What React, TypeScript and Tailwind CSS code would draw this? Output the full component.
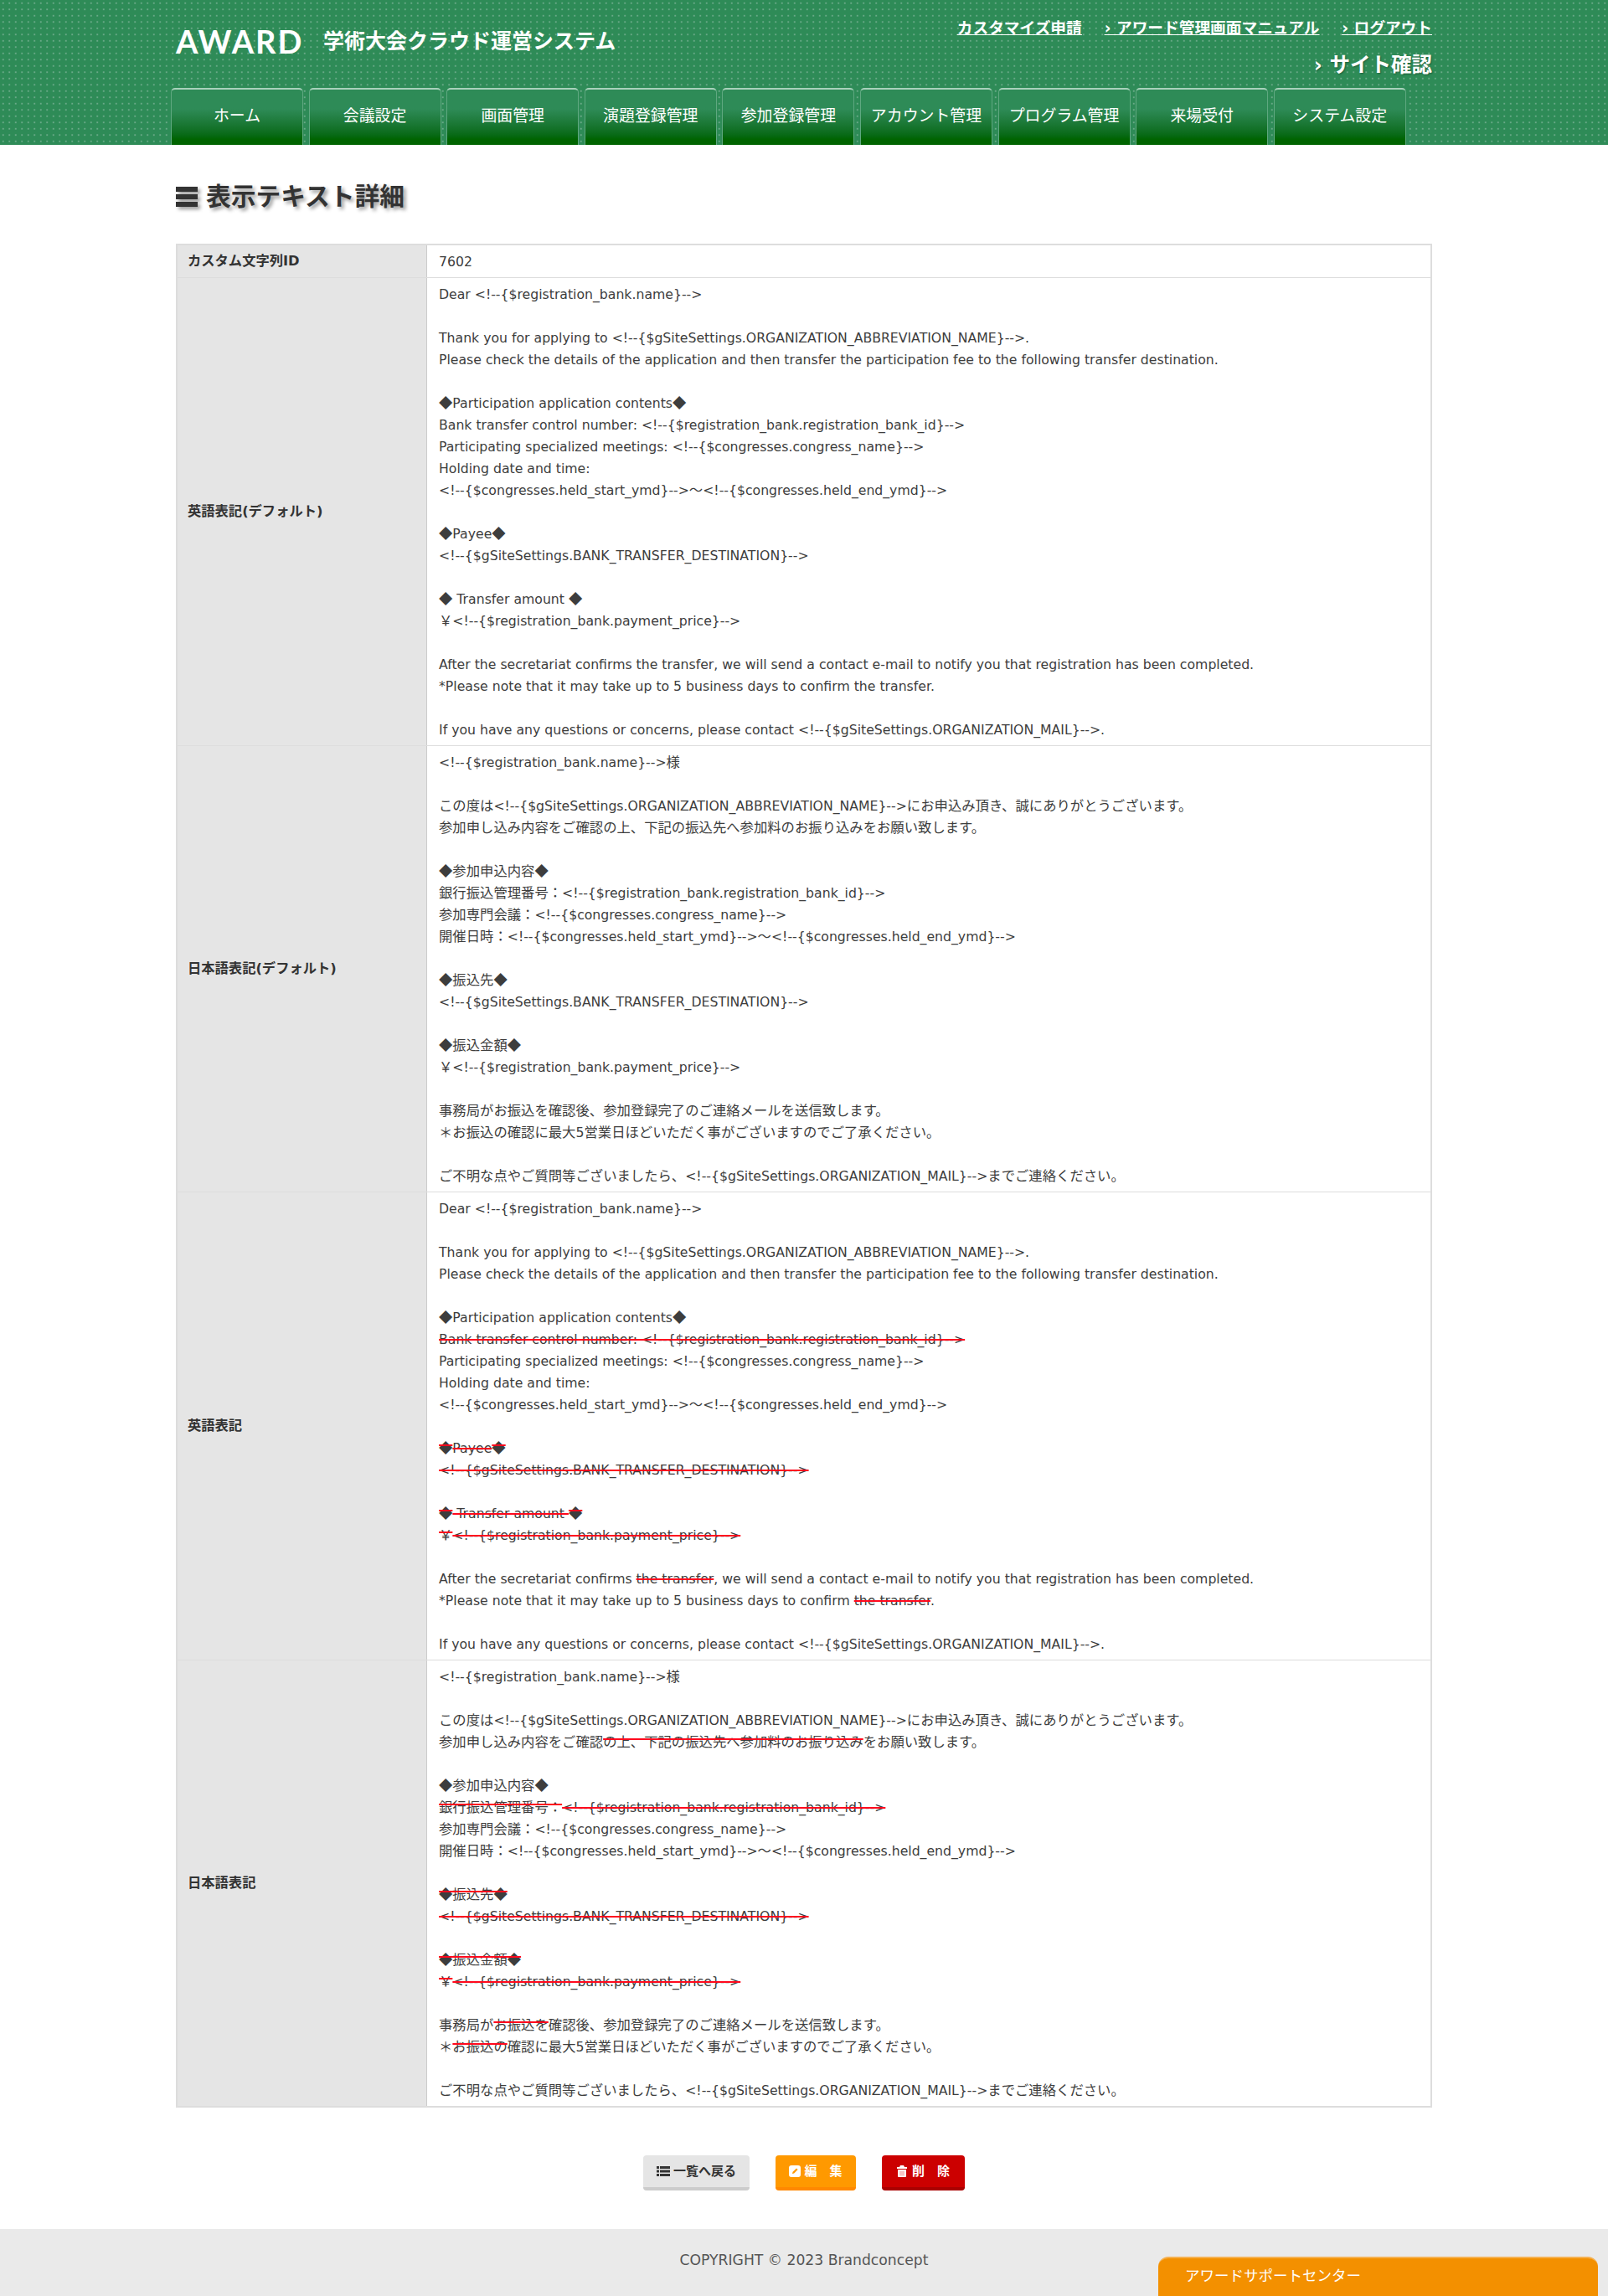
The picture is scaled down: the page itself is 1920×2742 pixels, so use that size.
import { ReactNode } from "react";

const navItems = [
  "ホーム",
  "会議設定",
  "画面管理",
  "演題登録管理",
  "参加登録管理",
  "アカウント管理",
  "プログラム管理",
  "来場受付",
  "システム設定",
];

// [[...]] marks the text that is struck through in red
const englishDefault = `Dear <!--{$registration_bank.name}-->

Thank you for applying to <!--{$gSiteSettings.ORGANIZATION_ABBREVIATION_NAME}-->.
Please check the details of the application and then transfer the participation fee to the following transfer destination.

◆Participation application contents◆
Bank transfer control number: <!--{$registration_bank.registration_bank_id}-->
Participating specialized meetings: <!--{$congresses.congress_name}-->
Holding date and time:
<!--{$congresses.held_start_ymd}-->～<!--{$congresses.held_end_ymd}-->

◆Payee◆
<!--{$gSiteSettings.BANK_TRANSFER_DESTINATION}-->

◆ Transfer amount ◆
￥<!--{$registration_bank.payment_price}-->

After the secretariat confirms the transfer, we will send a contact e-mail to notify you that registration has been completed.
*Please note that it may take up to 5 business days to confirm the transfer.

If you have any questions or concerns, please contact <!--{$gSiteSettings.ORGANIZATION_MAIL}-->.`;

const japaneseDefault = `<!--{$registration_bank.name}-->様

この度は<!--{$gSiteSettings.ORGANIZATION_ABBREVIATION_NAME}-->にお申込み頂き、誠にありがとうございます。
参加申し込み内容をご確認の上、下記の振込先へ参加料のお振り込みをお願い致します。

◆参加申込内容◆
銀行振込管理番号：<!--{$registration_bank.registration_bank_id}-->
参加専門会議：<!--{$congresses.congress_name}-->
開催日時：<!--{$congresses.held_start_ymd}-->～<!--{$congresses.held_end_ymd}-->

◆振込先◆
<!--{$gSiteSettings.BANK_TRANSFER_DESTINATION}-->

◆振込金額◆
￥<!--{$registration_bank.payment_price}-->

事務局がお振込を確認後、参加登録完了のご連絡メールを送信致します。
＊お振込の確認に最大5営業日ほどいただく事がございますのでご了承ください。

ご不明な点やご質問等ございましたら、<!--{$gSiteSettings.ORGANIZATION_MAIL}-->までご連絡ください。`;

const english = `Dear <!--{$registration_bank.name}-->

Thank you for applying to <!--{$gSiteSettings.ORGANIZATION_ABBREVIATION_NAME}-->.
Please check the details of the application and then transfer the participation fee to the following transfer destination.

◆Participation application contents◆
[[Bank transfer control number: <!--{$registration_bank.registration_bank_id}-->]]
Participating specialized meetings: <!--{$congresses.congress_name}-->
Holding date and time:
<!--{$congresses.held_start_ymd}-->～<!--{$congresses.held_end_ymd}-->

[[◆Payee◆]]
[[<!--{$gSiteSettings.BANK_TRANSFER_DESTINATION}-->]]

[[◆ Transfer amount ◆]]
[[￥<!--{$registration_bank.payment_price}-->]]

After the secretariat confirms [[the transfer]], we will send a contact e-mail to notify you that registration has been completed.
*Please note that it may take up to 5 business days to confirm [[the transfer]].

If you have any questions or concerns, please contact <!--{$gSiteSettings.ORGANIZATION_MAIL}-->.`;

const japanese = `<!--{$registration_bank.name}-->様

この度は<!--{$gSiteSettings.ORGANIZATION_ABBREVIATION_NAME}-->にお申込み頂き、誠にありがとうございます。
参加申し込み内容をご確認[[の上、下記の振込先へ参加料のお振り込み]]をお願い致します。

◆参加申込内容◆
[[銀行振込管理番号：<!--{$registration_bank.registration_bank_id}-->]]
参加専門会議：<!--{$congresses.congress_name}-->
開催日時：<!--{$congresses.held_start_ymd}-->～<!--{$congresses.held_end_ymd}-->

[[◆振込先◆]]
[[<!--{$gSiteSettings.BANK_TRANSFER_DESTINATION}-->]]

[[◆振込金額◆]]
[[￥<!--{$registration_bank.payment_price}-->]]

事務局が[[お振込を]]確認後、参加登録完了のご連絡メールを送信致します。
＊[[お振込の]]確認に最大5営業日ほどいただく事がございますのでご了承ください。

ご不明な点やご質問等ございましたら、<!--{$gSiteSettings.ORGANIZATION_MAIL}-->までご連絡ください。`;

const rows = [
  { label: "英語表記(デフォルト)", body: englishDefault },
  { label: "日本語表記(デフォルト)", body: japaneseDefault },
  { label: "英語表記", body: english },
  { label: "日本語表記", body: japanese },
];

// Japanese runs (and the ◆ marks) sit a little larger than the latin text around them
const Runs = ({ text }: { text: string }) => (
  <>
    {text.split(/([\u25c6\u3000-\u30ff\u4e00-\u9fff\uff00-\uffef]+)/).map((run, i) =>
      i % 2 === 1 ? (
        <span key={i} className="font-['Noto_Sans_CJK_JP',sans-serif] text-[16.35px] leading-none">
          {run}
        </span>
      ) : (
        run
      )
    )}
  </>
);

const Line = ({ text }: { text: string }) => {
  const parts = text.split(/(\[\[.*?\]\])/).filter(Boolean);
  return (
    <div className="h-[26px] whitespace-pre">
      {parts.map((part, i) =>
        part.startsWith("[[") ? (
          <span key={i} className="line-through decoration-[#ff0a1e] decoration-2">
            <Runs text={part.slice(2, -2)} />
          </span>
        ) : (
          <Runs key={i} text={part} />
        )
      )}
    </div>
  );
};

const Row = ({ label, children, last }: { label: string; children: ReactNode; last?: boolean }) => (
  <div className={`grid grid-cols-[298px_1fr] ${last ? "" : "border-b border-[#ddd]"}`}>
    <div className="flex items-center bg-[#e5e5e5] px-3 text-[16.3px] font-bold text-[#333] border-r border-[#ccc]">
      {label}
    </div>
    <div className="px-3.5 pt-[7px] pb-[5px] text-[15.7px] leading-[26px] text-[#3d3d3d]">{children}</div>
  </div>
);

const Header = () => (
  <header className="h-[173px] bg-[#2e8b57] bg-[radial-gradient(circle,#69a987_1px,transparent_1.2px)] bg-[length:7.5px_7.5px]">
    <div className="mx-auto flex h-full w-[1500px] flex-col">
      <div className="flex h-[105px] items-start justify-between">
        <div className="mt-[28px] flex items-center text-white">
          <span className="w-[176px] font-['Lato',sans-serif] text-[38px] leading-[40px] font-bold tracking-[2px]">
            AWARD
          </span>
          <span className="pt-[2px] text-[25px] leading-[40px] font-bold">学術大会クラウド運営システム</span>
        </div>
        <div className="flex flex-col items-end text-white">
          <div className="mt-[20px] flex gap-[27px] text-[18.7px] leading-[28px] font-bold underline">
            <a>カスタマイズ申請</a>
            <a>› アワード管理画面マニュアル</a>
            <a>› ログアウト</a>
          </div>
          <a className="mt-[14px] text-[24.5px] leading-[32px] font-bold [text-shadow:1px_1px_2px_#1b5e39]">› サイト確認</a>
        </div>
      </div>
      <nav className="-ml-1.5 flex h-[68px] gap-[6.6px]">
        {navItems.map((item) => (
          <a
            key={item}
            className="flex w-[158px] items-center justify-center rounded-t-[5px] border border-b-0 border-[#5fa880] border-t-[#a9d2bc] border-t-2 bg-gradient-to-b from-[#2e8b57] from-35% to-[#006400] to-90% pb-[3px] text-[18.9px] text-white"
          >
            {item}
          </a>
        ))}
      </nav>
    </div>
  </header>
);

const App = () => {
  return (
    <div className="relative min-h-[2742px] bg-white font-['DejaVu_Sans','Noto_Sans_CJK_JP',sans-serif]">
      <Header />
      <main className="mx-auto w-[1500px]">
        <h1 className="mt-[42px] mb-[36px] flex h-[40px] items-center gap-[10px] text-[29.75px] leading-[40px] font-bold text-[#333] [text-shadow:3px_3px_4px_#999]">
          <svg width="26" height="24" viewBox="0 0 26 24" className="drop-shadow-[3px_3px_2px_#999]">
            <rect x="0" y="0" width="26" height="6" fill="#333" />
            <rect x="0" y="9" width="26" height="6" fill="#333" />
            <rect x="0" y="18" width="26" height="6" fill="#333" />
          </svg>
          表示テキスト詳細
        </h1>

        <div className="border-2 border-[#ddd]">
          <Row label="カスタム文字列ID">7602</Row>
          {rows.map((row, i) => (
            <Row key={row.label} label={row.label} last={i === rows.length - 1}>
              {row.body.split("\n").map((line, j) => (
                <Line key={j} text={line} />
              ))}
            </Row>
          ))}
        </div>

        <div className="mt-[57px] flex justify-center gap-[31px] text-[15px] font-bold">
          <a className="flex h-[42px] w-[127px] items-center justify-center gap-1 rounded-[4px] border-b-4 border-[#ccc] bg-[#e5e5e5] text-[#333]">
            <svg width="16" height="12" viewBox="0 0 16 12" fill="#333">
              <rect x="0" y="0" width="3" height="3" />
              <rect x="4" y="0" width="12" height="3" />
              <rect x="0" y="4.5" width="3" height="3" />
              <rect x="4" y="4.5" width="12" height="3" />
              <rect x="0" y="9" width="3" height="3" />
              <rect x="4" y="9" width="12" height="3" />
            </svg>
            一覧へ戻る
          </a>
          <a className="flex h-[42px] w-[96px] items-center justify-center gap-1 rounded-[4px] border-b-4 border-[#f80] bg-[#f90] text-white">
            <svg width="14" height="14" viewBox="0 0 14 14">
              <rect width="14" height="14" rx="3" fill="#fff" />
              <path d="M4 10l.6-2.2L9 3.4l1.6 1.6L6.2 9.4z" fill="#f90" />
            </svg>
            編　集
          </a>
          <a className="flex h-[42px] w-[99px] items-center justify-center gap-1.5 rounded-[4px] border-b-4 border-[#a00] bg-[#c00] text-white">
            <svg width="12" height="14" viewBox="0 0 12 14" fill="#fff">
              <path d="M4 0h4l1 2h3v2H0V2h3z" />
              <path d="M1 5h10v8a1 1 0 0 1-1 1H2a1 1 0 0 1-1-1z" />
              <path d="M3.5 6.5h1v6h-1zM5.5 6.5h1v6h-1zM7.5 6.5h1v6h-1z" fill="#e88" />
            </svg>
            削　除
          </a>
        </div>
      </main>

      <footer className="relative mt-[46px] h-[81px] bg-[#eaeaea] pt-[24px] text-center text-[17.2px] leading-[26px] text-[#555]">
        COPYRIGHT © 2023 Brandconcept
        <div className="absolute right-[12px] bottom-0 h-[48px] w-[525px] rounded-t-[12px] border-t-2 border-[#f5b050] bg-[#f39000] pt-[8px] pl-[32px] text-left text-[17.5px] text-white">
          アワードサポートセンター
        </div>
      </footer>
    </div>
  );
};

export default App;
